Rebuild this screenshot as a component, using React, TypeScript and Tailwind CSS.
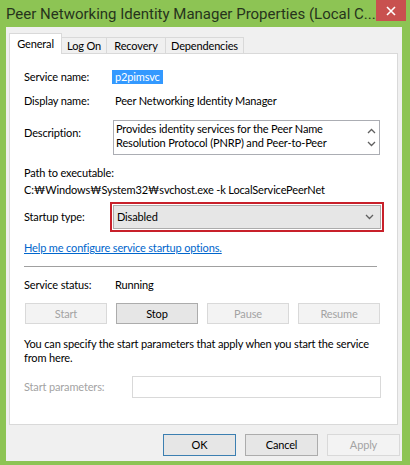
import React from 'react';

const font = { fontFamily: 'Lato, "Noto Sans", sans-serif' };
const titleFont = { fontFamily: 'Roboto, "Noto Sans", sans-serif' };

function Chevron({ up = false }: { up?: boolean }) {
  return (
    <svg width="9" height="6" viewBox="0 0 9 6" className="block">
      <path
        d={up ? 'M1 5L4.5 1.5L8 5' : 'M1 1L4.5 4.5L8 1'}
        fill="none"
        stroke="#606060"
        strokeWidth={1.3}
      />
    </svg>
  );
}

function ActionButton({ label, enabled = false }: { label: string; enabled?: boolean }) {
  return (
    <div
      className={
        enabled
          ? 'flex h-[21px] items-center justify-center border border-[#acacac] bg-[#e6e6e6] text-black'
          : 'flex h-[21px] items-center justify-center border border-[#d9d9d9] bg-[#f3f3f3] text-[#a3a3a3]'
      }
    >
      {label}
    </div>
  );
}

export default function App() {
  return (
    <div
      className="flex h-[465px] w-[410px] flex-col bg-[#8dc454] text-[11px] leading-[16px] tracking-[-0.15px]"
      style={font}
    >
      {/* Title bar */}
      <div className="flex h-[27px] shrink-0 items-start">
        <div
          className="flex-1 whitespace-nowrap pl-[6px] pt-[4px] text-[15px] leading-[20px] tracking-normal text-[#26341c]"
          style={titleFont}
        >
          Peer Networking Identity Manager Properties (Local C...
        </div>
        <div className="mr-[4px] flex h-[21px] w-[33px] items-center justify-center bg-[#c8514f]">
          <svg width="10" height="10" viewBox="0 0 10 10">
            <path d="M1 1L9 9M9 1L1 9" stroke="#fff" strokeWidth={1.6} />
          </svg>
        </div>
      </div>

      {/* Dialog body */}
      <div className="mb-[4px] ml-[6px] mr-[8px] flex flex-1 flex-col bg-[#f0f0f0]">
        {/* Tabs */}
        <div className="ml-[3px] flex h-[26px] items-end pt-[6px]">
          <div className="relative z-10 -mb-px flex h-[21px] w-[53px] items-start justify-center border border-b-0 border-[#d9d9d9] bg-white pt-[2px]">
            General
          </div>
          <div className="flex h-[16px] w-[45px] items-center justify-center border border-l-0 border-b-0 border-[#d9d9d9] bg-[#f0f0f0]">
            Log On
          </div>
          <div className="flex h-[16px] w-[59px] items-center justify-center border border-l-0 border-b-0 border-[#d9d9d9] bg-[#f0f0f0]">
            Recovery
          </div>
          <div className="flex h-[16px] w-[78px] items-center justify-center border border-l-0 border-b-0 border-[#d9d9d9] bg-[#f0f0f0]">
            Dependencies
          </div>
        </div>

        {/* Tab panel */}
        <div className="ml-[3px] flex h-[372px] w-[389px] flex-col border border-[#d9d9d9] bg-white pl-[14px] pr-[12px] text-black">
          <div className="mt-[13px] flex h-[20px] items-center">
            <div className="w-[91px]">Service name:</div>
            <div className="-ml-[3px] bg-[#3399ff] px-[3px] leading-[14px] text-white">p2pimsvc</div>
          </div>
          <div className="mt-[4px] flex h-[20px] items-center">
            <div className="w-[91px]">Display name:</div>
            <div>Peer Networking Identity Manager</div>
          </div>

          <div className="mt-[9px] flex">
            <div className="mt-[5px] w-[89px]">Description:</div>
            <div className="flex h-[35px] w-[267px] overflow-hidden border border-[#abadb3] bg-white">
              <div className="flex-1 whitespace-nowrap pl-[2px] pt-px leading-[14px]">
                Provides identity services for the Peer Name
                <br />
                Resolution Protocol (PNRP) and Peer-to-Peer
              </div>
              <div className="flex w-[16px] flex-col items-center justify-around py-[3px]">
                <Chevron up />
                <Chevron />
              </div>
            </div>
          </div>

          <div className="mt-[10px]">Path to executable:</div>
          <div className="mt-px whitespace-nowrap">C:₩Windows₩System32₩svchost.exe -k LocalServicePeerNet</div>

          <div className="mt-[4px] flex items-center">
            <div className="w-[86px]">Startup type:</div>
            <div className="flex h-[30px] w-[274px] border-2 border-[#c8202a] p-px">
              <div className="flex flex-1 items-center border border-[#acacac] bg-[#e6e6e6] pl-[3px] pr-[6px]">
                <span className="flex-1">Disabled</span>
                <Chevron />
              </div>
            </div>
          </div>

          <div className="mt-[8px] text-[#0066cc] underline">Help me configure service startup options.</div>

          <div className="mr-[8px] mt-[10px] h-px bg-[#a0a0a0]" />

          <div className="mt-[10px] flex">
            <div className="w-[91px]">Service status:</div>
            <div>Running</div>
          </div>

          <div className="ml-px mt-[10px] grid grid-cols-4 gap-[9px] pr-[5px]">
            <ActionButton label="Start" />
            <ActionButton label="Stop" enabled />
            <ActionButton label="Pause" />
            <ActionButton label="Resume" />
          </div>

          <div className="mt-[13px] whitespace-nowrap leading-[14px]">
            You can specify the start parameters that apply when you start the service
            <br />
            from here.
          </div>

          <div className="mt-[11px] flex items-center">
            <div className="w-[108px] text-[#a3a3a3]">Start parameters:</div>
            <div className="h-[22px] w-[249px] border border-[#d9d9d9] bg-white" />
          </div>
        </div>

        {/* Dialog buttons */}
        <div className="mt-[9px] flex justify-end gap-[9px] pr-[2px]">
          <div className="flex h-[22px] w-[73px] items-center justify-center border border-[#3c7fb1] bg-[#e6e6e6]">
            OK
          </div>
          <div className="flex h-[22px] w-[73px] items-center justify-center border border-[#acacac] bg-[#e6e6e6]">
            Cancel
          </div>
          <div className="flex h-[22px] w-[73px] items-center justify-center border border-[#d9d9d9] bg-[#f3f3f3] text-[#a3a3a3]">
            Apply
          </div>
        </div>
      </div>
    </div>
  );
}
